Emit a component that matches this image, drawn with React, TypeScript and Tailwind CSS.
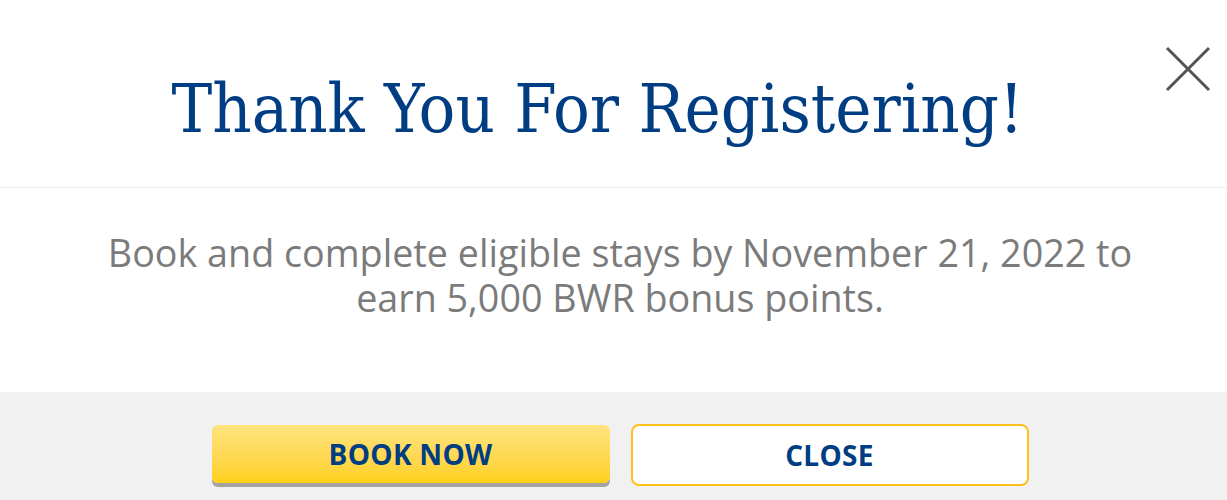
import React from "react";

function CloseIcon() {
  return (
    <svg width="46" height="46" viewBox="0 0 46 46" fill="none">
      <path d="M2 2L44 44M44 2L2 44" stroke="#555555" strokeWidth="3" />
    </svg>
  );
}

export default function App() {
  return (
    <div className="w-[1227px] h-[500px] overflow-hidden bg-white" style={{ fontFamily: '"Open Sans", sans-serif' }}>
      {/* Header */}
      <header className="relative h-[188px] border-b border-[#ececec] flex items-center justify-center">
        <h1
          className="text-[#003d82] text-[68px] leading-none font-stretch-condensed pr-[32px] pt-[30px]"
          style={{ fontFamily: '"DejaVu Serif", serif' }}
        >
          Thank You For Registering!
        </h1>
        <button className="absolute right-[16px] top-[46px]">
          <CloseIcon />
        </button>
      </header>

      {/* Body */}
      <section className="h-[204px] flex items-center justify-center pl-[13px] pb-[30px]">
        <p className="text-[#7b7b7b] text-[37.7px] leading-[45px] text-center">
          Book and complete eligible stays by November 21, 2022 to
          <br />
          earn 5,000 BWR bonus points.
        </p>
      </section>

      {/* Footer */}
      <footer className="h-[200px] bg-[#f1f1f1] flex justify-center gap-[21px] pt-[33px] pl-[13px]">
        <button className="w-[398px] h-[58px] rounded-[6px] bg-gradient-to-b from-[#ffe37c] to-[#ffd010] shadow-[0_4px_0_#a3a3a3] text-[#003d82] font-bold text-[28px] tracking-[0.3px]">
          BOOK NOW
        </button>
        <button className="w-[398px] h-[62px] -mt-[1px] rounded-[8px] bg-white border-2 border-[#ffc01e] text-[#003d82] font-bold text-[28px] tracking-[0.3px]">
          CLOSE
        </button>
      </footer>
    </div>
  );
}
